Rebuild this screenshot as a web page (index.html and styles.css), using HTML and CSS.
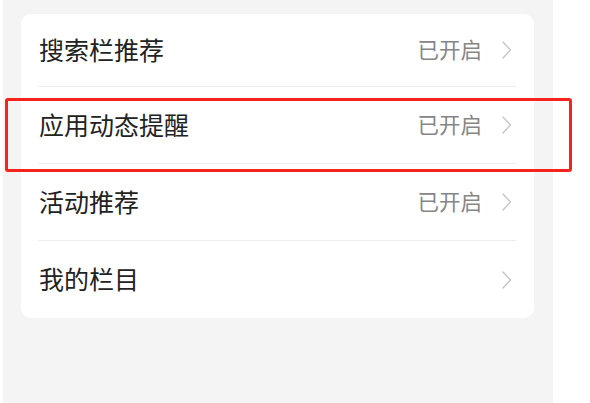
FILE: index.html
```html
<!DOCTYPE html>
<html lang="zh-CN">
<head>
<meta charset="utf-8">
<title>设置</title>
<link rel="stylesheet" href="styles.css">
</head>
<body>
<div class="panel">
  <div class="card">
    <div class="row row-first">
      <span class="label">搜索栏推荐</span>
      <span class="value">已开启</span>
      <svg class="chev" width="10" height="18" viewBox="0 0 10 18"><polyline points="1,1 8.5,9 1,17" fill="none" stroke="#c4c4c4" stroke-width="1.3" stroke-linecap="round" stroke-linejoin="round"/></svg>
    </div>
    <div class="row">
      <span class="label">应用动态提醒</span>
      <span class="value">已开启</span>
      <svg class="chev" width="10" height="18" viewBox="0 0 10 18"><polyline points="1,1 8.5,9 1,17" fill="none" stroke="#c4c4c4" stroke-width="1.3" stroke-linecap="round" stroke-linejoin="round"/></svg>
    </div>
    <div class="row">
      <span class="label">活动推荐</span>
      <span class="value">已开启</span>
      <svg class="chev" width="10" height="18" viewBox="0 0 10 18"><polyline points="1,1 8.5,9 1,17" fill="none" stroke="#c4c4c4" stroke-width="1.3" stroke-linecap="round" stroke-linejoin="round"/></svg>
    </div>
    <div class="row row-last">
      <span class="label">我的栏目</span>
      <svg class="chev" width="10" height="18" viewBox="0 0 10 18"><polyline points="1,1 8.5,9 1,17" fill="none" stroke="#c4c4c4" stroke-width="1.3" stroke-linecap="round" stroke-linejoin="round"/></svg>
    </div>
  </div>
</div>
<div class="highlight"></div>
</body>
</html>
```

FILE: styles.css
```css
html, body {
  margin: 0;
  padding: 0;
  background: #ffffff;
}
body {
  width: 590px;
  height: 403px;
  overflow: hidden;
  position: relative;
  font-family: "Noto Sans CJK SC", "Noto Sans", sans-serif;
}
.panel {
  margin-left: 3px;
  width: 550px;
  height: 403px;
  box-sizing: border-box;
  background: #f4f4f4;
  padding: 14px 19px 0 18px;
}
.card {
  background: #ffffff;
  border-radius: 10px;
  padding: 0 18px 0 17px;
}
.row {
  display: flex;
  align-items: center;
  height: 77px;
  box-sizing: border-box;
  border-bottom: 1px solid #eeeeee;
  padding: 0 4px 0 1px;
}
.row-first {
  height: 73px;
}
.row-last {
  border-bottom: none;
  height: 77px;
}
.label {
  flex: 1;
  font-size: 25px;
  color: #222222;
  line-height: 1;
  margin-top: -2px;
}
.value {
  font-size: 21.5px;
  color: #868686;
  line-height: 1;
  margin-right: 20px;
  margin-top: -2px;
}
.chev {
  display: block;
}
.highlight {
  position: absolute;
  left: 5px;
  top: 98px;
  width: 567px;
  height: 74px;
  box-sizing: border-box;
  border: 3px solid #f5231b;
  border-radius: 3px;
}
```
